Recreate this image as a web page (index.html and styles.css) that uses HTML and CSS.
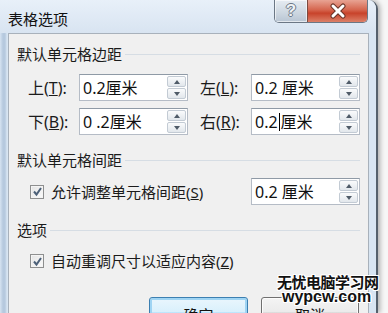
FILE: index.html
```html
<!DOCTYPE html>
<html lang="zh-CN">
<head>
    <meta charset="UTF-8">
    <meta name="viewport" content="width=device-width, initial-scale=1.0">
    <title>表格选项</title>
    <link rel="stylesheet" href="styles.css">
</head>
<body>
    <div class="window">
        <div class="titlebar">
            <span class="title">表格选项</span>
            <div class="caption">
                <span class="cap-help">?</span>
                <span class="cap-close">
                    <svg width="20" height="16" viewBox="0 0 20 16">
                        <path d="M5 3 L15 13 M15 3 L5 13" stroke="#6a3428" stroke-width="5" stroke-linecap="round"/>
                        <path d="M5 3 L15 13 M15 3 L5 13" stroke="#fff" stroke-width="3" stroke-linecap="round"/>
                    </svg>
                </span>
            </div>
        </div>

        <div class="panel">
            <div class="group-head"><span>默认单元格边距</span><i class="rule"></i></div>
            <div class="margin-grid">
                <label>上(<u>T</u>):</label>
                <div class="field"><span class="value">0.2厘米</span><span class="spin"><b class="up"></b><b class="down"></b></span></div>
                <label class="second">左(<u>L</u>):</label>
                <div class="field"><span class="value">0.2 厘米</span><span class="spin"><b class="up"></b><b class="down"></b></span></div>

                <label>下(<u>B</u>):</label>
                <div class="field"><span class="value">0 .2厘米</span><span class="spin"><b class="up"></b><b class="down"></b></span></div>
                <label class="second">右(<u>R</u>):</label>
                <div class="field"><span class="value">0.2<i class="caret"></i>厘米</span><span class="spin"><b class="up"></b><b class="down"></b></span></div>
            </div>

            <div class="group-head spaced"><span>默认单元格间距</span><i class="rule"></i></div>
            <div class="check-row">
                <span class="checkbox"><svg width="11" height="11" viewBox="0 0 11 11"><path d="M2 5.5 L4.5 8.5 L9 2" fill="none" stroke="#4d6179" stroke-width="2"/></svg></span>
                <span>允许调整单元格间距(<u>S</u>)</span>
                <div class="field short"><span class="value">0.2 厘米</span><span class="spin"><b class="up"></b><b class="down"></b></span></div>
            </div>

            <div class="group-head spaced"><span>选项</span><i class="rule"></i></div>
            <div class="check-row plain">
                <span class="checkbox"><svg width="11" height="11" viewBox="0 0 11 11"><path d="M2 5.5 L4.5 8.5 L9 2" fill="none" stroke="#4d6179" stroke-width="2"/></svg></span>
                <span>自动重调尺寸以适应内容(<u>Z</u>)</span>
            </div>

            <div class="buttons">
                <button class="btn focused">确定</button>
                <button class="btn cancel">取消</button>
            </div>
        </div>
    </div>

    <div class="watermark">
        <div class="wm-cn">无忧电脑学习网</div>
        <div class="wm-en">wypcw.com</div>
    </div>
</body>
</html>
```

FILE: styles.css
```css
body {
    margin: 0;
    background-color: #f6f6f6;
    font-family: "Noto Sans", "Noto Sans CJK SC", sans-serif;
    color: #1b1b1b;
}

.window {
    width: 376px;
    height: 313px;
    border-right: 2px solid #55606c;
    border-top-right-radius: 9px;
    background: linear-gradient(to right, #d6e3f1 0, #b6c9de 3px, #b6c9de 5px, #d8e5f2 7px);
    box-shadow: 2px 0 5px rgba(0, 0, 0, 0.3);
    overflow: hidden;
    display: flex;
    flex-direction: column;
}

.titlebar {
    flex: none;
    height: 33px;
    display: flex;
    align-items: flex-start;
    padding: 0 8px;
    background: linear-gradient(#e8f0f9, #d8e4f1);
}

.title {
    margin-top: 9px;
    font-size: 15px;
    line-height: 20px;
    color: #111;
}

.caption {
    margin-left: auto;
    display: flex;
    height: 22px;
    border: 1px solid #6b7785;
    border-top: none;
    border-radius: 0 0 5px 5px;
    overflow: hidden;
}

.cap-help {
    width: 32px;
    display: flex;
    justify-content: center;
    align-items: center;
    background: linear-gradient(#e6ecf2, #ccd6e0 60%, #b8c5d3);
    box-shadow: inset 0 0 0 1px rgba(255, 255, 255, 0.6);
    font-family: "Liberation Sans", sans-serif;
    font-size: 17px;
    font-weight: bold;
    color: #eef2f6;
    text-shadow: 1px 0 0 #6d7885, -1px 0 0 #6d7885, 0 1px 0 #6d7885, 0 -1px 0 #6d7885;
}

.cap-close {
    width: 59px;
    display: flex;
    justify-content: center;
    align-items: center;
    border-left: 1px solid #7b4a40;
    background: linear-gradient(#e8a393, #d5654e 45%, #c8432b 60%, #dc8068);
}

.panel {
    flex: 1;
    margin: 0 7px 0 8px;
    padding-right: 8px;
    background-color: #f0f0f0;
    border: 1px solid #a8b1bb;
    border-bottom: none;
    display: flex;
    flex-direction: column;
}

.group-head {
    margin-top: 10px;
    padding-left: 8px;
    height: 20px;
    display: flex;
    align-items: center;
    gap: 3px;
    font-size: 15px;
    line-height: 20px;
}

.group-head.spaced {
    margin-top: 15px;
}

.rule {
    flex: 1;
    height: 1px;
    background-color: #d6dde4;
}

.margin-grid {
    margin-top: 10px;
    padding-left: 19px;
    display: grid;
    grid-template-columns: 51px 109px 63px 109px;
    grid-auto-rows: 27px;
    row-gap: 7px;
}

.margin-grid label {
    align-self: center;
    font-size: 16px;
    line-height: 20px;
}

.margin-grid label.second {
    padding-left: 12px;
}

.field {
    box-sizing: border-box;
    height: 27px;
    display: flex;
    align-items: center;
    padding-left: 3px;
    background-color: #fff;
    border: 1px solid #b5bcc6;
    border-top-color: #8f9aa6;
}

.field.short {
    width: 109px;
    margin-left: auto;
}

.value {
    font-size: 16px;
    line-height: 20px;
    color: #111;
    white-space: pre;
    display: flex;
    align-items: center;
}

.caret {
    display: inline-block;
    width: 1px;
    height: 18px;
    margin: 0 1px;
    background-color: #000;
}

.spin {
    margin-left: auto;
    margin-right: 1px;
    width: 19px;
    height: 23px;
    display: flex;
    flex-direction: column;
    gap: 1px;
}

.spin b {
    flex: 1;
    display: flex;
    justify-content: center;
    align-items: center;
    border: 1px solid #c3cbd4;
    border-radius: 2px;
    background: linear-gradient(#fafbfc, #e2e7ec);
}

.spin b::after {
    content: "";
    width: 0;
    height: 0;
    border-left: 3.5px solid transparent;
    border-right: 3.5px solid transparent;
}

.spin .up::after {
    border-bottom: 4px solid #4f5b68;
}

.spin .down::after {
    border-top: 4px solid #4f5b68;
}

.check-row {
    margin-top: 8px;
    height: 27px;
    padding-left: 21px;
    display: flex;
    align-items: center;
    font-size: 15px;
    line-height: 20px;
}

.check-row.plain {
    margin-top: 11px;
    height: 20px;
}

.checkbox {
    box-sizing: border-box;
    width: 14px;
    height: 14px;
    margin-right: 7px;
    display: flex;
    justify-content: center;
    align-items: center;
    border: 1px solid #8e8f8f;
    background: linear-gradient(135deg, #e4e4e4, #fbfbfb);
    box-shadow: inset 0 0 0 1px #f4f4f4;
}

.buttons {
    margin-top: 26px;
    margin-right: 1px;
    display: flex;
    justify-content: flex-end;
    gap: 13px;
}

.btn {
    height: 30px;
    padding: 5px 0 0;
    font-family: "Noto Sans CJK SC", sans-serif;
    font-size: 15px;
    color: #111;
    border-radius: 3px;
    background: linear-gradient(#f4f4f4, #ebebeb 50%, #dddddd 51%, #cfcfcf);
}

.btn.focused {
    width: 99px;
    border: 1px solid #3c7fb1;
    box-shadow: inset 0 0 0 2px #9fd4f3;
    background: linear-gradient(#eaf6fd, #d9f0fc 50%, #bee6fd 51%, #a7d9f5);
}

.btn.cancel {
    width: 98px;
    border: 1px solid #707070;
    box-shadow: inset 0 0 0 1px #fcfcfc;
}

.watermark {
    position: absolute;
    left: 277px;
    top: 275px;
    white-space: nowrap;
    font-weight: bold;
    color: #111;
    text-shadow: 1px 0 0 #fff, -1px 0 0 #fff, 0 1px 0 #fff, 0 -1px 0 #fff, 1px 1px 0 #fff, -1px -1px 0 #fff, 1px -1px 0 #fff, -1px 1px 0 #fff;
}

.wm-cn {
    font-family: "Noto Sans CJK SC", sans-serif;
    font-size: 15px;
    line-height: 14px;
    letter-spacing: -0.5px;
}

.wm-en {
    margin-left: 5px;
    font-family: "Liberation Sans", sans-serif;
    font-size: 16px;
    line-height: 16px;
}
```
